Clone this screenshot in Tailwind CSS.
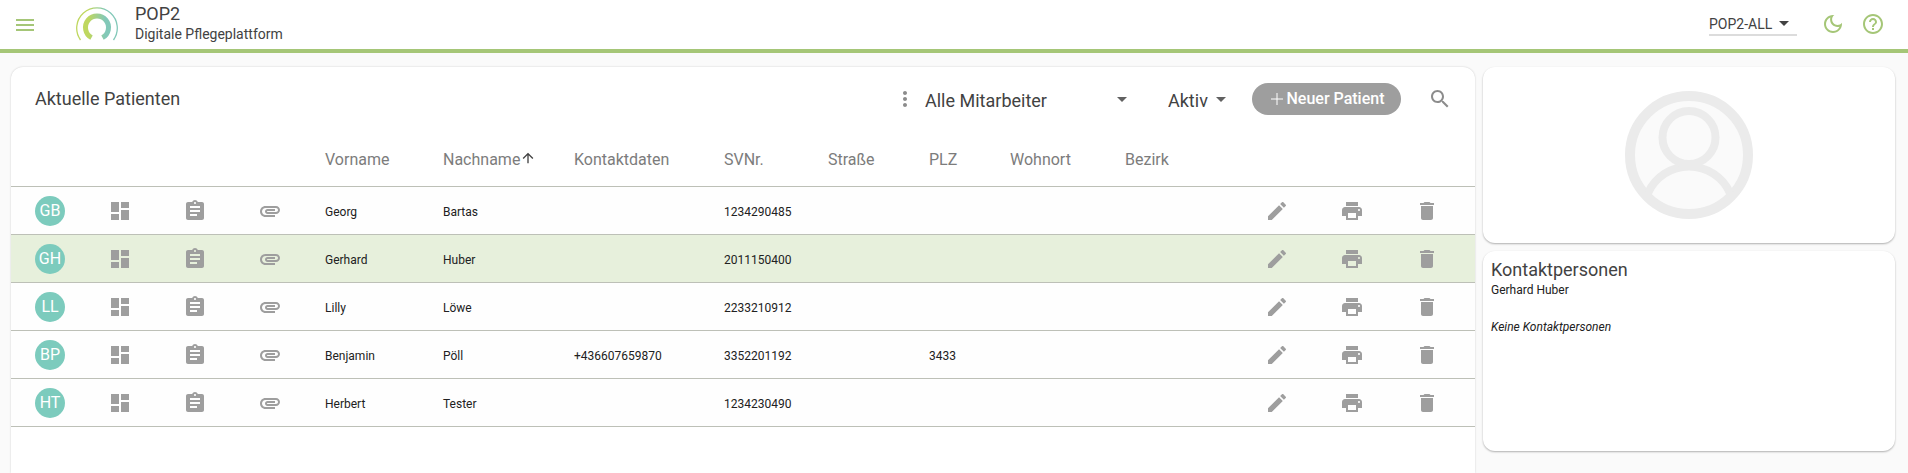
<!DOCTYPE html>
<html lang="de">
<head>
  <meta charset="UTF-8" />
  <meta name="viewport" content="width=device-width, initial-scale=1.0" />
  <title>POP2 - Digitale Pflegeplattform</title>
  <script src="https://cdn.jsdelivr.net/npm/@tailwindcss/browser@4"></script>
</head>
<body class="h-screen flex flex-col overflow-hidden bg-[#fafafa] font-['Roboto',sans-serif] text-[#424242]">

  <!-- Icons -->
  <svg class="hidden">
    <symbol id="i-dashboard" viewBox="0 0 24 24"><path d="M3 13h8V3H3v10zm0 8h8v-6H3v6zm10 0h8V11h-8v10zm0-18v6h8V3h-8z"/></symbol>
    <symbol id="i-assignment" viewBox="0 0 24 24"><path d="M19 3h-4.18C14.4 1.84 13.3 1 12 1c-1.3 0-2.4.84-2.82 2H5c-1.1 0-2 .9-2 2v14c0 1.1.9 2 2 2h14c1.1 0 2-.9 2-2V5c0-1.1-.9-2-2-2zm-7 0c.55 0 1 .45 1 1s-.45 1-1 1-1-.45-1-1 .45-1 1-1zm2 14H7v-2h7v2zm3-4H7v-2h10v2zm0-4H7V7h10v2z"/></symbol>
    <symbol id="i-attach" viewBox="0 0 24 24"><path d="M2 12.5C2 9.46 4.46 7 7.5 7H18c2.21 0 4 1.79 4 4s-1.79 4-4 4H9.5C8.12 15 7 13.88 7 12.5S8.12 10 9.5 10H17v2H9.41c-.55 0-.55 1 0 1H18c1.1 0 2-.9 2-2s-.9-2-2-2H7.5C5.57 9 4 10.57 4 12.5S5.57 16 7.5 16H17v2H7.5C4.46 18 2 15.54 2 12.5z"/></symbol>
    <symbol id="i-edit" viewBox="0 0 24 24"><path d="M3 17.25V21h3.75L17.81 9.94l-3.75-3.75L3 17.25zM20.71 7.04c.39-.39.39-1.02 0-1.41l-2.34-2.34c-.39-.39-1.02-.39-1.41 0l-1.83 1.83 3.75 3.75 1.83-1.83z"/></symbol>
    <symbol id="i-print" viewBox="0 0 24 24"><path d="M19 8H5c-1.66 0-3 1.34-3 3v6h4v4h12v-4h4v-6c0-1.66-1.34-3-3-3zm-3 11H8v-5h8v5zm3-7c-.55 0-1-.45-1-1s.45-1 1-1 1 .45 1 1-.45 1-1 1zm-1-9H6v4h12V3z"/></symbol>
    <symbol id="i-delete" viewBox="0 0 24 24"><path d="M6 19c0 1.1.9 2 2 2h8c1.1 0 2-.9 2-2V7H6v12zM19 4h-3.5l-1-1h-5l-1 1H5v2h14V4z"/></symbol>
    <symbol id="i-dropdown" viewBox="0 0 10 5"><path d="M0 0h10L5 5z"/></symbol>
  </svg>

  <header class="flex shrink-0 items-center h-[53px] border-b-4 border-[#a5c677] bg-white pl-[13px] pr-[23px]">
    <button type="button" aria-label="Menü" class="text-[#a5c677]">
      <svg class="size-6 fill-current" viewBox="0 0 24 24"><path d="M3 18h18v-2H3v2zm0-5h18v-2H3v2zm0-7v2h18V6H3z"/></svg>
    </button>
    <svg class="ml-[39px] w-[42px] h-9" viewBox="0 0 42 36" fill="none">
      <defs>
        <linearGradient id="ring" gradientUnits="userSpaceOnUse" x1="0" y1="0" x2="42" y2="0">
          <stop offset="0.3" stop-color="#bfd75f"/>
          <stop offset="0.7" stop-color="#82c8b8"/>
        </linearGradient>
      </defs>
      <path d="M15.500 30.600A11.500 11.500 0 1 1 26.500 30.600" stroke="url(#ring)" stroke-width="5"/>
      <path d="M4.500 33A20.300 20.300 0 1 1 37.500 33" stroke="url(#ring)" stroke-width="1.300"/>
    </svg>
    <div class="ml-[17px] pb-0.5">
      <h1 class="text-lg leading-5">POP2</h1>
      <p class="text-sm leading-5">Digitale Pflegeplattform</p>
    </div>
    <div class="relative ml-auto w-[88px] border-b-2 border-[#dcdcdc]">
      <select aria-label="Mandant" class="block w-full h-[21px] appearance-none text-sm">
        <option>POP2-ALL</option>
      </select>
      <svg class="pointer-events-none absolute right-2 top-2 w-2.5 h-[5px] fill-current"><use href="#i-dropdown"/></svg>
    </div>
    <button type="button" aria-label="Dunkelmodus" class="ml-6 pb-0.5 text-[#a5c677]">
      <svg class="size-6 fill-current" viewBox="0 0 24 24"><path d="M9.370 5.510C9.190 6.150 9.100 6.820 9.100 7.500c0 4.080 3.320 7.400 7.400 7.400.68 0 1.350-.09 1.990-.27C17.450 17.190 14.930 19 12 19c-3.860 0-7-3.140-7-7 0-2.930 1.810-5.450 4.370-6.490zM12 3c-4.970 0-9 4.030-9 9s4.030 9 9 9 9-4.030 9-9c0-.46-.04-.92-.1-1.360-.98 1.370-2.580 2.260-4.400 2.260-2.980 0-5.400-2.420-5.400-5.400 0-1.810.89-3.420 2.260-4.400C12.920 3.040 12.460 3 12 3z"/></svg>
    </button>
    <button type="button" aria-label="Hilfe" class="ml-4 pb-0.5 text-[#a5c677]">
      <svg class="size-6 fill-current" viewBox="0 0 24 24"><path d="M11 18h2v-2h-2v2zm1-16C6.480 2 2 6.480 2 12s4.480 10 10 10 10-4.480 10-10S17.520 2 12 2zm0 18c-4.410 0-8-3.590-8-8s3.590-8 8-8 8 3.590 8 8-3.590 8-8 8zm0-14c-2.210 0-4 1.790-4 4h2c0-1.100.9-2 2-2s2 .9 2 2c0 2-3 1.750-3 5h2c0-2.250 3-2.500 3-5 0-2.210-1.790-4-4-4z"/></svg>
    </button>
  </header>

  <main class="flex flex-1 min-h-0 gap-2 pt-3.5 pl-[11px] pr-[13px]">

    <!-- Patientenliste -->
    <section class="flex-1 min-w-0 rounded-t-xl bg-white shadow-[0_0_2px_rgba(0,0,0,0.2)]">
      <div class="flex items-center h-16 pl-6 pr-[23px]">
        <h2 class="text-lg">Aktuelle Patienten</h2>
        <button type="button" aria-label="Mehr" class="ml-auto text-[#8c8c8c]">
          <svg class="size-6 fill-current" viewBox="0 0 24 24"><path d="M12 8c1.100 0 2-.9 2-2s-.9-2-2-2-2 .9-2 2 .9 2 2 2zm0 2c-1.100 0-2 .9-2 2s.9 2 2 2 2-.9 2-2-.9-2-2-2zm0 6c-1.100 0-2 .9-2 2s.9 2 2 2 2-.9 2-2-.9-2-2-2z"/></svg>
        </button>
        <div class="relative ml-2 w-[204px]">
          <select aria-label="Mitarbeiter" class="block w-full h-8 pt-1 appearance-none text-lg">
            <option>Alle Mitarbeiter</option>
          </select>
          <svg class="pointer-events-none absolute right-0.5 top-3.5 w-2.5 h-[5px] fill-[#616161]"><use href="#i-dropdown"/></svg>
        </div>
        <div class="relative ml-[39px] w-[60px]">
          <select aria-label="Status" class="block w-full h-8 pt-1 appearance-none text-lg">
            <option>Aktiv</option>
          </select>
          <svg class="pointer-events-none absolute right-0.5 top-3.5 w-2.5 h-[5px] fill-[#616161]"><use href="#i-dropdown"/></svg>
        </div>
        <button type="button" class="ml-6 flex items-center justify-center gap-1 w-[149px] h-8 pl-0.5 rounded-full bg-[#9e9e9e] text-white font-medium">
          <svg class="size-3 stroke-current" viewBox="0 0 12 12"><path d="M6 0v12M0 6h12"/></svg>
          Neuer Patient
        </button>
        <button type="button" aria-label="Suche" class="ml-[27px] text-[#8c8c8c]">
          <svg class="size-6 fill-current" viewBox="0 0 24 24"><path d="M15.500 14h-.79l-.28-.27C15.410 12.590 16 11.110 16 9.500 16 5.910 13.090 3 9.500 3S3 5.910 3 9.500 5.910 16 9.500 16c1.610 0 3.090-.59 4.230-1.570l.27.28v.79l5 4.990L20.490 19l-4.990-5zm-6 0C7.010 14 5 11.990 5 9.500S7.010 5 9.500 5 14 7.010 14 9.500 11.990 14 9.500 14z"/></svg>
        </button>
      </div>

      <table class="w-full table-fixed border-separate border-spacing-0 text-left">
        <colgroup>
          <col class="w-[97px]" />
          <col class="w-[75px]" />
          <col class="w-[75px]" />
          <col class="w-[67px]" />
          <col class="w-[118px]" />
          <col class="w-[131px]" />
          <col class="w-[150px]" />
          <col class="w-[104px]" />
          <col class="w-[101px]" />
          <col class="w-[81px]" />
          <col class="w-[115px]" />
          <col />
          <col class="w-[75px]" />
          <col class="w-[75px]" />
          <col class="w-[60px]" />
        </colgroup>
        <thead class="text-base text-[#7c7c7c]">
          <tr class="h-14 *:border-b *:border-[#bdc0b7] *:pt-0.5 *:font-normal">
            <th colspan="4"></th>
            <th>Vorname</th>
            <th class="whitespace-nowrap">Nachname<svg class="inline size-4 -mt-1 fill-[#424242]" viewBox="0 0 24 24"><path d="M4 12l1.410 1.410L11 7.830V20h2V7.830l5.580 5.590L20 12l-8-8-8 8z"/></svg></th>
            <th>Kontaktdaten</th>
            <th>SVNr.</th>
            <th>Straße</th>
            <th>PLZ</th>
            <th>Wohnort</th>
            <th>Bezirk</th>
            <th colspan="3"></th>
          </tr>
        </thead>
        <tbody id="patienten" class="text-xs text-[#212121]"></tbody>
      </table>
    </section>

    <!-- Detailansicht -->
    <aside class="flex flex-col gap-2 w-[412px] shrink-0">
      <div class="flex items-center justify-center h-44 rounded-xl bg-white shadow-[0_1px_2px_rgba(0,0,0,0.3)]">
        <svg class="size-32" viewBox="0 0 128 128" fill="none" stroke="#ebebeb">
          <circle cx="64" cy="64" r="59" fill="#fafafa" stroke-width="10"/>
          <path d="M23 102A45 45 0 0 1 105 102" stroke-width="8"/>
          <circle cx="64" cy="46.500" r="26.500" stroke-width="8"/>
        </svg>
      </div>
      <div class="h-[200px] rounded-xl bg-white px-2 pt-[7px] text-xs text-[#212121] shadow-[0_1px_2px_rgba(0,0,0,0.3)]">
        <h2 class="text-lg leading-6 text-[#424242]">Kontaktpersonen</h2>
        <p>Gerhard Huber</p>
        <p class="mt-[21px] italic">Keine Kontaktpersonen</p>
      </div>
    </aside>
  </main>

  <script>
    const patienten = [
      { vorname: "Georg", nachname: "Bartas", kontakt: "", svnr: "1234290485", plz: "" },
      { vorname: "Gerhard", nachname: "Huber", kontakt: "", svnr: "2011150400", plz: "", aktiv: true },
      { vorname: "Lilly", nachname: "Löwe", kontakt: "", svnr: "2233210912", plz: "" },
      { vorname: "Benjamin", nachname: "Pöll", kontakt: "+436607659870", svnr: "3352201192", plz: "3433" },
      { vorname: "Herbert", nachname: "Tester", kontakt: "", svnr: "1234230490", plz: "" }
    ];

    function iconZelle(icon, label) {
      return `<td><button type="button" aria-label="${label}" class="block"><svg class="size-6 fill-[#9e9e9e]"><use href="#${icon}"/></svg></button></td>`;
    }

    function textZelle(text) {
      return `<td class="pt-0.5">${text}</td>`;
    }

    document.getElementById("patienten").innerHTML = patienten.map(p => `
      <tr class="h-12 *:border-b *:border-[#bdc0b7] ${p.aktiv ? "bg-[#e7f0dc]" : "bg-[#fefefe]"}">
        <td class="pl-6"><span class="flex items-center justify-center size-[30px] rounded-full bg-[#7ccbbd] text-base text-white">${p.vorname[0]}${p.nachname[0]}</span></td>
        ${iconZelle("i-dashboard", "Übersicht")}
        ${iconZelle("i-assignment", "Dokumentation")}
        ${iconZelle("i-attach", "Anhänge")}
        ${textZelle(p.vorname)}
        ${textZelle(p.nachname)}
        ${textZelle(p.kontakt)}
        ${textZelle(p.svnr)}
        <td></td>
        ${textZelle(p.plz)}
        <td></td>
        <td></td>
        ${iconZelle("i-edit", "Bearbeiten")}
        ${iconZelle("i-print", "Drucken")}
        ${iconZelle("i-delete", "Löschen")}
      </tr>`).join("");
  </script>
</body>
</html>
